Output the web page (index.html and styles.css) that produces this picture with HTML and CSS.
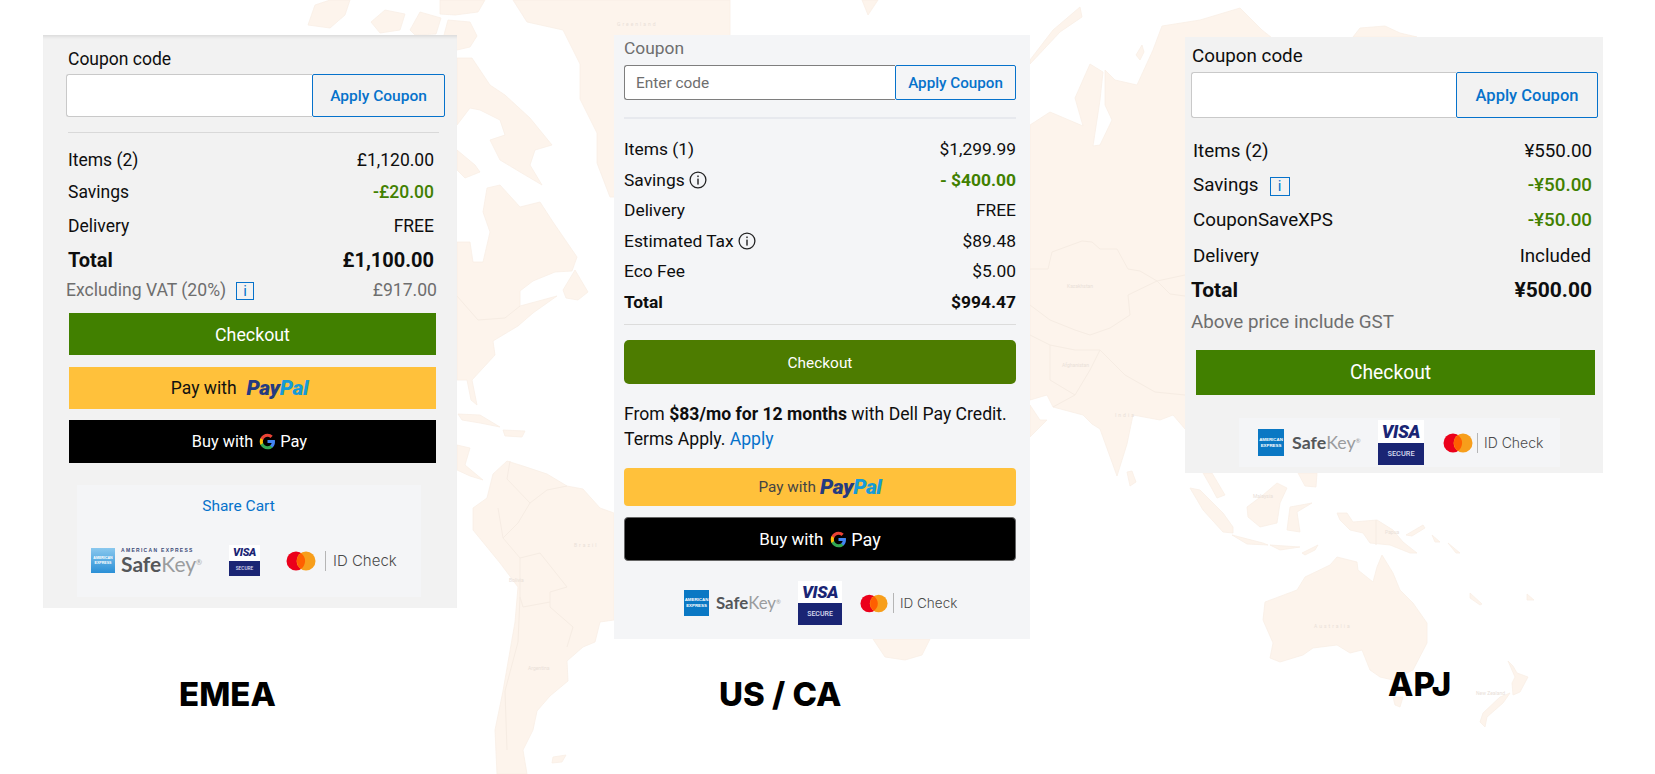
FILE: index.html
```html
<!DOCTYPE html>
<html lang="en">
<head>
<meta charset="utf-8">
<title>Checkout summaries by region</title>
<link rel="stylesheet" href="styles.css">
</head>
<body>
<svg class="sprite" aria-hidden="true">
  <symbol id="g-logo" viewBox="0 0 24 24">
    <path fill="#4285F4" d="M22.56 12.25c0-.78-.07-1.53-.2-2.25H12v4.26h5.92c-.26 1.37-1.04 2.53-2.21 3.31v2.77h3.57c2.08-1.92 3.28-4.74 3.28-8.09z"/>
    <path fill="#34A853" d="M12 23c2.97 0 5.46-.98 7.28-2.66l-3.57-2.77c-.98.66-2.23 1.06-3.71 1.06-2.86 0-5.29-1.93-6.16-4.53H2.18v2.84C3.99 20.53 7.7 23 12 23z"/>
    <path fill="#FBBC05" d="M5.84 14.09c-.22-.66-.35-1.36-.35-2.09s.13-1.43.35-2.09V7.07H2.18C1.43 8.55 1 10.22 1 12s.43 3.45 1.18 4.93l3.66-2.84z"/>
    <path fill="#EA4335" d="M12 5.38c1.62 0 3.06.56 4.21 1.64l3.15-3.15C17.45 2.09 14.97 1 12 1 7.7 1 3.99 3.47 2.18 7.07l3.66 2.84c.87-2.6 3.3-4.53 6.16-4.53z"/>
  </symbol>
  <symbol id="mc-logo" viewBox="0 0 30 20">
    <circle cx="10" cy="10" r="9.5" fill="#eb001b"/>
    <circle cx="20" cy="10" r="9.5" fill="#f79e1b"/>
    <path fill="#ff5f00" d="M15 2.2a9.5 9.5 0 0 1 0 15.6a9.5 9.5 0 0 1 0-15.6z"/>
  </symbol>
  <symbol id="info-round" viewBox="0 0 18 18">
    <circle cx="9" cy="9" r="7.9" fill="none" stroke="#222" stroke-width="1.3"/>
    <rect x="8.3" y="7.6" width="1.4" height="6" fill="#222"/>
    <rect x="8.3" y="4.5" width="1.4" height="1.6" fill="#222"/>
  </symbol>
</svg>

<main class="stage">
  <svg class="map" viewBox="0 0 1655 774" aria-hidden="true">
    <g class="land">
      <polygon points="308,25 315,5 330,0 350,0 345,15 330,28"/>
      <polygon points="371,22 385,10 405,14 400,30 380,33"/>
      <polygon points="410,30 420,12 441,18 436,34 415,35"/>
      <polygon points="440,0 485,0 478,12 455,15 440,14"/>
      <polygon points="444,35 448,20 470,22 477,36 470,47 457,50"/>
      <polygon points="457,58 472,58 490,85 505,95 530,118 552,145 535,150 530,165 542,185 520,172 500,160 490,140 505,135 500,120 480,110 470,108 457,125"/>
      <polygon points="457,150 475,165 480,172 465,178 457,170"/>
      <polygon points="487,188 500,185 520,207 540,202 553,222 577,257 572,271 555,272 533,281 520,291 520,306 557,296 533,313 518,326 493,341 495,355 472,380 477,405 471,400 467,380 457,380 457,242 470,242 473,262 483,262 490,232 483,212"/>
      <polygon points="563,290 575,270 588,292 578,300 566,298"/>
      <polygon points="458,414 480,415 500,427 480,423 462,420"/>
      <polygon points="503,430 525,431 522,437 505,436"/>
      <polygon points="457,445 470,448 465,465 483,480 470,476 457,470"/>
      <polygon points="507,461 523,466 547,474 567,486 583,489 600,508 614,513 614,620 600,622 595,642 583,647 567,661 568,681 550,696 537,711 533,730 523,750 527,774 497,774 495,730 503,691 515,622 518,587 500,563 473,530 473,508 487,498 493,474"/>
      <polygon points="553,757 566,755 562,762 552,763"/>
      <polygon points="513,0 730,0 730,40 614,197 610,197 597,163 597,133 580,99 580,64 563,30 527,22"/>
      <polygon points="862,0 878,0 868,15"/>
      <polygon points="873,639 930,639 922,655 905,660 885,657"/>
      <polygon points="1030,60 1053,30 1080,7 1082,17 1060,32 1045,48 1030,64"/>
      <polygon points="1136,55 1142,45 1144,52 1140,60"/>
      <polygon points="1030,125 1050,112 1083,126 1075,98 1090,64 1103,72 1100,100 1093,146 1100,145 1112,120 1105,105 1105,70 1115,80 1137,85 1153,50 1162,26 1200,20 1240,8 1262,30 1300,60 1300,440 1185,429 1173,415 1160,420 1133,415 1127,444 1117,476 1100,429 1092,424 1083,415 1053,407 1047,395 1030,400"/>
      <polygon points="1030,405 1040,420 1047,420 1030,437"/>
      <polygon points="1127,472 1132,471 1136,482 1130,486"/>
      <polygon points="1353,37 1360,28 1385,26 1400,33 1417,37"/>
      <polygon points="1190,488 1200,490 1223,513 1233,527 1233,533 1223,532 1203,510"/>
      <polygon points="1203,473 1212,473 1225,495 1217,498 1211,487"/>
      <polygon points="1247,507 1263,495 1277,483 1287,488 1280,503 1277,523 1260,527 1248,517"/>
      <polygon points="1290,507 1312,503 1297,512 1300,532 1287,530"/>
      <polygon points="1298,473 1317,473 1316,487 1305,486"/>
      <polygon points="1232,535 1263,543 1268,545 1247,544"/>
      <polygon points="1270,545 1300,547 1280,550"/>
      <polygon points="1302,553 1318,545 1315,550 1305,555"/>
      <polygon points="1337,513 1347,513 1353,522 1377,520 1393,530 1403,542 1417,553 1410,553 1390,545 1370,543 1363,533 1350,530 1340,520"/>
      <polygon points="1406,535 1423,525 1425,528 1412,536"/>
      <polygon points="1432,535 1440,542 1435,542"/>
      <polygon points="1448,543 1460,553 1456,553"/>
      <polygon points="1470,593 1482,604 1480,605 1470,598"/>
      <polygon points="1527,594 1534,600 1527,600"/>
      <polygon points="1265,602 1297,590 1305,577 1330,565 1337,557 1357,562 1358,570 1373,582 1377,567 1382,555 1393,573 1400,590 1413,603 1427,623 1427,643 1413,670 1393,680 1380,677 1370,670 1362,650 1350,653 1337,645 1313,648 1303,655 1280,662 1270,658 1273,643 1263,620"/>
      <polygon points="1393,697 1403,697 1400,707 1395,705"/>
      <polygon points="1508,661 1513,666 1517,673 1528,677 1520,692 1513,695 1512,683 1515,677"/>
      <polygon points="1510,693 1503,703 1487,717 1485,727 1480,722 1483,713 1500,697"/>
    </g>
    <g class="borders">
      <polyline points="1030,269 1048,269 1052,252 1082,241 1092,242 1100,249 1117,249 1128,269 1140,271 1157,281 1170,294 1185,296"/>
      <polyline points="1157,281 1185,275"/>
      <polyline points="1030,305 1050,320 1075,330 1090,335 1110,328 1130,315 1128,295 1157,281"/>
      <polyline points="1050,345 1050,380 1075,395 1090,370 1100,350 1125,375 1155,392 1185,395"/>
      <polyline points="1053,407 1075,395"/>
      <polyline points="1030,335 1050,345 1075,350 1100,350"/>
      <polyline points="510,461 507,479 530,503 518,523 503,538 520,558 540,553 567,587 550,592 550,607 573,627 567,647"/>
      <polyline points="520,597 518,642 505,691 507,750"/>
      <polyline points="498,508 503,538"/>
      <polyline points="520,558 520,597 523,607 550,602"/>
      <polyline points="530,503 547,490 567,486"/>
      <polyline points="457,296 478,320 505,318 520,306"/>
      <polyline points="1376,520 1376,545"/>
    </g>
    <g class="place">
      <text x="617" y="26" class="spaced">Greenland</text>
      <text x="574" y="547" class="spaced">Brazil</text>
      <text x="1067" y="288">Kazakhstan</text>
      <text x="1062" y="367">Afghanistan</text>
      <text x="1115" y="417" class="spaced">India</text>
      <text x="1314" y="628" class="spaced">Australia</text>
      <text x="1476" y="695">New Zealand</text>
      <text x="1385" y="534">Papua</text>
      <text x="1253" y="498">Malaysia</text>
      <text x="509" y="582">Bolivia</text>
      <text x="528" y="670">Argentina</text>
    </g>
  </svg>

  <section class="col col-emea">
    <div class="panel panel-emea">
      <label class="coupon-label">Coupon code</label>
      <div class="coupon">
        <input class="coupon-input" type="text" aria-label="Coupon code">
        <button class="coupon-apply">Apply Coupon</button>
      </div>
      <hr class="rule">
      <div class="rows">
        <div class="row"><span>Items (2)</span><span>£1,120.00</span></div>
        <div class="row"><span>Savings</span><span class="saving">-£20.00</span></div>
        <div class="row"><span>Delivery</span><span>FREE</span></div>
        <div class="row row-total"><span>Total</span><span>£1,100.00</span></div>
        <div class="row row-note"><span class="with-info">Excluding VAT (20%)<span class="info-box">i</span></span><span>£917.00</span></div>
      </div>
      <button class="btn btn-checkout">Checkout</button>
      <button class="btn btn-paypal"><span class="pay-with">Pay with</span><span class="paypal"><b>Pay</b><i>Pal</i></span></button>
      <button class="btn btn-gpay"><span>Buy with</span><svg class="g"><use href="#g-logo"/></svg><span class="gpay-pay">Pay</span></button>
      <div class="share-card">
        <a class="share" href="#">Share Cart</a>
        <div class="trust">
          <span class="amex"><span>AMERICAN</span><span>EXPRESS</span></span>
          <span class="safekey"><small>AMERICAN EXPRESS</small><span class="sk"><b>Safe</b>Key<sup>®</sup></span></span>
          <span class="visa"><b>VISA</b><span>SECURE</span></span>
          <svg class="mc"><use href="#mc-logo"/></svg>
          <span class="idcheck">ID Check</span>
        </div>
      </div>
    </div>
    <h2 class="region">EMEA</h2>
  </section>

  <section class="col col-us">
    <div class="panel panel-us">
      <label class="coupon-label">Coupon</label>
      <div class="coupon">
        <input class="coupon-input" type="text" placeholder="Enter code" aria-label="Coupon">
        <button class="coupon-apply">Apply Coupon</button>
      </div>
      <hr class="rule">
      <div class="rows">
        <div class="row"><span>Items (1)</span><span>$1,299.99</span></div>
        <div class="row"><span class="with-info">Savings<svg class="info-round"><use href="#info-round"/></svg></span><span class="saving">- $400.00</span></div>
        <div class="row"><span>Delivery</span><span>FREE</span></div>
        <div class="row"><span class="with-info">Estimated Tax<svg class="info-round"><use href="#info-round"/></svg></span><span>$89.48</span></div>
        <div class="row"><span>Eco Fee</span><span>$5.00</span></div>
        <div class="row row-total"><span>Total</span><span>$994.47</span></div>
      </div>
      <hr class="rule rule-thin">
      <button class="btn btn-checkout">Checkout</button>
      <p class="finance"><span>From </span><b>$83/mo for 12 months</b><span> with Dell Pay Credit. Terms Apply. </span><a href="#">Apply</a></p>
      <button class="btn btn-paypal"><span class="pay-with">Pay with</span><span class="paypal"><b>Pay</b><i>Pal</i></span></button>
      <button class="btn btn-gpay"><span>Buy with</span><svg class="g"><use href="#g-logo"/></svg><span class="gpay-pay">Pay</span></button>
      <div class="trust">
        <span class="amex"><span>AMERICAN</span><span>EXPRESS</span></span>
        <span class="safekey"><span class="sk"><b>Safe</b>Key<sup>®</sup></span></span>
        <span class="visa"><b>VISA</b><span>SECURE</span></span>
        <svg class="mc"><use href="#mc-logo"/></svg>
        <span class="idcheck">ID Check</span>
      </div>
    </div>
    <h2 class="region">US / CA</h2>
  </section>

  <section class="col col-apj">
    <div class="panel panel-apj">
      <label class="coupon-label">Coupon code</label>
      <div class="coupon">
        <input class="coupon-input" type="text" aria-label="Coupon code">
        <button class="coupon-apply">Apply Coupon</button>
      </div>
      <div class="rows">
        <div class="row"><span>Items (2)</span><span>¥550.00</span></div>
        <div class="row"><span class="with-info">Savings<span class="info-box">i</span></span><span class="saving">-¥50.00</span></div>
        <div class="row"><span>CouponSaveXPS</span><span class="saving">-¥50.00</span></div>
        <div class="row row-delivery"><span>Delivery</span><span>Included</span></div>
        <div class="row row-total"><span>Total</span><span>¥500.00</span></div>
        <div class="row row-note"><span>Above price include GST</span></div>
      </div>
      <button class="btn btn-checkout">Checkout</button>
      <div class="trust">
        <span class="amex"><span>AMERICAN</span><span>EXPRESS</span></span>
        <span class="safekey"><span class="sk"><b>Safe</b>Key<sup>®</sup></span></span>
        <span class="visa"><b>VISA</b><span>SECURE</span></span>
        <svg class="mc"><use href="#mc-logo"/></svg>
        <span class="idcheck">ID Check</span>
      </div>
    </div>
    <h2 class="region">APJ</h2>
  </section>
</main>
</body>
</html>
```
FILE: styles.css
```css
* { box-sizing: border-box; }
html, body { margin: 0; padding: 0; background: #fff; }
body { font-family: Roboto, "Liberation Sans", sans-serif; color: #0e0e0e; }
.sprite { position: absolute; width: 0; height: 0; }

.stage {
  position: relative;
  width: 1655px;
  height: 774px;
  overflow: hidden;
  display: flex;
  align-items: flex-start;
  padding-left: 43px;
}

/* world map behind everything */
.map { position: absolute; left: 0; top: 0; width: 1655px; height: 774px; }
.land polygon { fill: #fdf4ec; stroke: #f9efe6; stroke-width: .8; stroke-linejoin: round; }
.borders polyline { fill: none; stroke: #f6ece3; stroke-width: 1; }
.place text { font: 5px Roboto, sans-serif; fill: #e9e0d8; }
.place .spaced { letter-spacing: 2px; }

.col { position: relative; display: flex; flex-direction: column; align-items: flex-start; }
.col-emea { width: 414px; margin-right: 157px; padding-top: 35px; }
.col-us { width: 416px; margin-right: 155px; padding-top: 35px; }
.col-apj { width: 418px; padding-top: 37px; }

.panel { width: 100%; display: flex; flex-direction: column; background: #f2f2f2; }
.panel-us { background: #f4f5f7; }

.region { margin: 0; height: 40px; line-height: 40px; font-weight: 800; font-family: Inter, Roboto, sans-serif; color: #000; white-space: nowrap; }

/* coupon */
.coupon-label { height: 20px; line-height: 20px; }
.coupon { display: flex; }
.coupon-input { display: block; min-width: 0; flex: 1 1 auto; margin: 0; padding: 0 11px; background: #fff; border: 1px solid #c9c9c9; border-right: 0; border-radius: 3px 0 0 3px; font: 15.4px Roboto, sans-serif; }
.coupon-input::placeholder { color: #6e6e6e; opacity: 1; }
.coupon-apply { flex: none; margin: 0; padding: 0; background: #f2f2f2; color: #0672cb; border: 1px solid #0672cb; border-radius: 2px; font: 500 15px Roboto, sans-serif; }
.rule { margin: 0; border: 0; background: #d9d9d9; height: 1px; }

/* rows */
.rows { display: flex; flex-direction: column; }
.row { display: flex; justify-content: space-between; align-items: center; height: 24px; white-space: nowrap; }
.row-total { font-weight: 700; }
.saving { color: #418000; font-weight: 500; }
.row-note { color: #6e6e6e; }
.with-info { display: flex; align-items: center; }
.info-box { display: flex; align-items: center; justify-content: center; width: 18px; height: 18px; border: 1px solid #0672cb; color: #0672cb; font-size: 15px; line-height: 1; }
.info-round { width: 18px; height: 18px; margin-left: 4px; }

/* buttons */
.btn { display: flex; align-items: center; justify-content: center; margin: 0; padding: 0; border: 0; font-family: Roboto, sans-serif; flex: none; }
.btn-checkout { background: #418000; color: #fff; }
.btn-paypal { background: #ffc13b; color: #111; }
.btn-gpay { background: #000; color: #fff; font-weight: 400; }
.paypal { font-family: Roboto, sans-serif; font-weight: 900; font-style: italic; letter-spacing: -.4px; }
.paypal b { color: #253b80; font-weight: 900; }
.paypal i { color: #179bd7; }
.g { flex: none; }
.gpay-pay { font-weight: 400; }

/* trust badges */
.trust { display: flex; align-items: center; flex: none; }
.amex { display: flex; flex-direction: column; align-items: center; justify-content: center; flex: none; background: #0a78c4; color: #fff; font: 700 4.4px/1.3 "Liberation Sans", sans-serif; }
.safekey { display: flex; flex-direction: column; color: #4f5254; font-family: Lato, "Open Sans", sans-serif; flex: none; }
.safekey small { font: 700 5px/6px "Liberation Sans", sans-serif; letter-spacing: 1.3px; color: #3a4a78; white-space: nowrap; }
.sk { color: #9a9c9e; line-height: 1; white-space: nowrap; }
.sk b { color: #54575a; font-weight: 700; }
.sk sup { font-size: 35%; vertical-align: .9em; line-height: 0; }
.visa { display: flex; flex-direction: column; background: #fff; flex: none; }
.visa b { flex: 1 1 50%; display: flex; align-items: center; justify-content: center; font-family: Roboto, sans-serif; font-style: italic; font-weight: 900; letter-spacing: -.3px; color: #1a2574; }
.visa span { flex: 1 1 50%; display: flex; align-items: center; justify-content: center; background: #1a2574; color: #d9ddf0; font-family: Roboto, sans-serif; font-weight: 500; }
.mc { flex: none; }
.idcheck { flex: none; border-left: 1px solid #b5b5b5; color: #4a4a4a; font-family: Inter, "Open Sans", sans-serif; font-weight: 300; white-space: nowrap; display: flex; align-items: center; }

/* ---- EMEA ---- */
.panel-emea { height: 573px; box-shadow: inset 0 4px 3px -2px #dcdcdc; font-size: 17.5px; }
.panel-emea .coupon-label { margin: 14px 0 0 25px; }
.panel-emea .coupon { margin: 5px 0 0 23px; width: 379px; height: 43px; }
.panel-emea .coupon-apply { width: 133px; font-size: 15.5px; }
.panel-emea .rule { margin: 15px 0 0 25px; width: 371px; }
.panel-emea .rows { margin: 15px 0 0 25px; width: 366px; }
.panel-emea .row:nth-child(2) { margin-top: 8px; }
.panel-emea .row:nth-child(3) { margin-top: 10px; }
.panel-emea .row-total { margin-top: 10px; font-size: 20px; }
.panel-emea .row-note { margin: 6px -3px 0 -2px; font-size: 17.6px; }
.panel-emea .info-box { margin: 2px 0 0 10px; }
.panel-emea .btn { margin-left: 26px; width: 367px; height: 42px; font-size: 17.8px; }
.panel-emea .btn-checkout { margin-top: 11px; }
.panel-emea .btn-paypal { margin-top: 12px; height: 42px; padding-right: 26px; font-size: 17.5px; }
.panel-emea .btn-gpay { margin-top: 11px; height: 43px; padding-right: 6px; font-size: 16.3px; }
.panel-emea .pay-with { margin-right: 10px; }
.panel-emea .paypal { font-size: 21px; }
.panel-emea .g { width: 17px; height: 17px; margin: 0 4px 0 6px; }
.panel-emea .gpay-pay { font-size: 16.5px; }
.share-card { margin: 22px 0 0 34px; width: 344px; height: 112px; padding-top: 11px; background: #f4f5f7; display: flex; flex-direction: column; }
.share { height: 20px; line-height: 20px; font-size: 15.5px; text-align: center; padding-right: 21px; color: #0672cb; text-decoration: none; }
.panel-emea .trust { margin: 29px 0 0 14px; height: 31px; }
.panel-emea .amex { width: 24px; height: 25px; background: linear-gradient(#8ac8ee, #2a8fd6); font-size: 3.6px; }
.panel-emea .safekey { margin-left: 6px; width: 78px; }
.panel-emea .sk { font-size: 21px; }
.panel-emea .visa { margin-left: 30px; width: 31px; height: 31px; }
.panel-emea .visa b { font-size: 11px; }
.panel-emea .visa span { font-size: 4.8px; }
.panel-emea .mc { margin-left: 26px; width: 30px; height: 20px; }
.panel-emea .idcheck { margin-left: 9px; padding-left: 7px; height: 20px; font-size: 15px; }

/* ---- US / CA ---- */
.panel-us { height: 604px; font-size: 17.4px; }
.panel-us .coupon-label { margin: 3px 0 0 10px; color: #6e6e6e; }
.panel-us .coupon { margin: 7px 0 0 10px; width: 392px; height: 35px; }
.panel-us .coupon-input { border-color: #7e7e7e; }
.panel-us .coupon-apply { width: 121px; background: #f4f5f7; font-size: 15.2px; }
.panel-us .rule { margin: 17px 0 0 10px; width: 392px; height: 2px; background: #e7e9ee; }
.panel-us .rows { margin: 18px 0 0 10px; width: 392px; gap: 6.5px; }
.panel-us .saving { font-weight: 700; }
.panel-us .rule-thin { margin-top: 10.5px; height: 1px; background: #dcdcdc; }
.panel-us .btn { margin-left: 10px; width: 392px; border-radius: 4px; }
.panel-us .btn-checkout { margin-top: 15px; height: 44px; padding-top: 2px; background: #4d7c00; font-size: 15.4px; font-weight: 400; border-radius: 5px; }
.finance { margin: 18px 0 0 10px; width: 392px; line-height: 25px; font-size: 17.6px; }
.finance a { color: #0672cb; text-decoration: none; }
.panel-us .btn-paypal { margin-top: 16px; height: 38px; font-size: 15.3px; color: #444; }
.panel-us .pay-with { margin-right: 4px; }
.panel-us .paypal { font-size: 21px; }
.panel-us .btn-gpay { margin-top: 11px; height: 44px; border: 1px solid #666; font-size: 17px; }
.panel-us .g { width: 17px; height: 17px; margin: 0 4px 0 7px; }
.panel-us .gpay-pay { font-size: 18px; }
.panel-us .trust { margin: 20px 0 0 70px; height: 44px; }
.panel-us .amex { width: 25px; height: 26px; }
.panel-us .safekey { margin-left: 7px; width: 65px; }
.panel-us .sk { font-size: 16.8px; }
.panel-us .visa { margin-left: 17px; width: 44px; height: 44px; }
.panel-us .visa b { font-size: 17px; }
.panel-us .visa span { font-size: 7px; }
.panel-us .mc { margin-left: 18px; width: 28px; height: 19px; }
.panel-us .idcheck { margin-left: 5px; padding-left: 6px; height: 20px; font-size: 13.5px; }

/* ---- APJ ---- */
.panel-apj { height: 436px; font-size: 18.8px; }
.panel-apj .coupon-label { margin: 9px 0 0 7px; }
.panel-apj .coupon { margin: 6px 0 0 6px; width: 407px; height: 46px; }
.panel-apj .coupon-apply { width: 142px; font-size: 16.5px; }
.panel-apj .rows { margin: 21px 0 0 8px; width: 399px; }
.panel-apj .row:nth-child(2) { margin-top: 10px; }
.panel-apj .row:nth-child(3) { margin-top: 11px; }
.panel-apj .row:nth-child(4) { margin-top: 12px; }
.panel-apj .row-delivery { padding-right: 1px; }
.panel-apj .row-total { margin: 10px 0 0 -2px; font-size: 21px; }
.panel-apj .row-note { margin: 8px 0 0 -2px; }
.panel-apj .info-box { margin: 2px 0 0 11px; width: 20px; height: 19px; }
.panel-apj .btn-checkout { margin: 16px 0 0 11px; width: 399px; height: 45px; padding-right: 10px; font-size: 19.3px; }
.panel-apj .trust { margin: 23px 0 0 54px; width: 321px; height: 49px; padding-left: 19px; background: #f4f5f7; }
.panel-apj .amex { width: 26px; height: 27px; }
.panel-apj .safekey { margin-left: 8px; width: 67px; }
.panel-apj .sk { font-size: 17.8px; }
.panel-apj .visa { margin-left: 19px; width: 46px; height: 45px; }
.panel-apj .visa b { font-size: 18px; }
.panel-apj .visa span { font-size: 7.4px; }
.panel-apj .mc { margin-left: 19px; width: 30px; height: 20px; }
.panel-apj .idcheck { margin-left: 4px; padding-left: 6px; height: 20px; font-size: 14px; }

/* region captions */
.col-emea .region { margin: 66px 0 0 136px; font-size: 33px; }
.col-us .region { margin: 35px 0 0 105px; font-size: 33px; }
.col-apj .region { margin: 191px 0 0 203px; font-size: 33px; }
```
